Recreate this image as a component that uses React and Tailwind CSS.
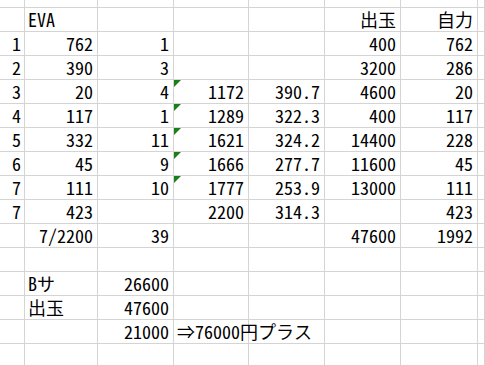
import React from 'react'

const rows = [
  // [rowNo, A, B, C, D, E, F, flagged]
  ['', { t: 'EVA', left: true }, '', '', '', '出玉', '自力', false],
  ['1', '762', '1', '', '', '400', '762', false],
  ['2', '390', '3', '', '', '3200', '286', false],
  ['3', '20', '4', '1172', '390.7', '4600', '20', true],
  ['4', '117', '1', '1289', '322.3', '400', '117', true],
  ['5', '332', '11', '1621', '324.2', '14400', '228', true],
  ['6', '45', '9', '1666', '277.7', '11600', '45', true],
  ['7', '111', '10', '1777', '253.9', '13000', '111', true],
  ['7', '423', '', '2200', '314.3', '', '423', false],
  ['', '7/2200', '39', '', '', '47600', '1992', false],
  ['', '', '', '', '', '', '', false],
  ['', { t: 'Bサ', left: true }, '26600', '', '', '', '', false],
  ['', { t: '出玉', left: true }, '47600', '', '', '', '', false],
  ['', '', '21000', { t: '⇒76000円プラス', left: true }, '', '', '', false],
]

const Cell = ({ value, flagged, first }) => {
  const v = typeof value === 'object' ? value : { t: value, left: false }
  return (
    <div
      className={`relative flex items-end border-r border-b border-[#d4d4d4] whitespace-nowrap leading-[20px] pb-[2px] ${
        v.left ? 'justify-start pl-[3px]' : first ? 'justify-end pr-[3px]' : 'justify-end pr-[4px]'
      }`}
    >
      {flagged && (
        <span className="absolute left-0 top-0 w-0 h-0 border-t-[7px] border-r-[7px] border-t-[#1a7f1a] border-r-transparent" />
      )}
      <span className="relative">{v.t}</span>
    </div>
  )
}

export default function App() {
  return (
    <div
      className="w-[485px] h-[365px] overflow-hidden bg-white text-black text-[18px]"
      style={{ fontFamily: '"Noto Sans Mono CJK JP", "Noto Sans CJK JP", monospace' }}
    >
      <div className="grid grid-cols-[25px_73px_76px_75px_76px_76px_77px_1fr] grid-rows-[8px_repeat(14,24px)_21px]">
        {Array.from({ length: 8 }).map((_, i) => (
          <div key={`top-${i}`} className="border-r border-b border-[#d4d4d4]" />
        ))}
        {rows.map((r, ri) => (
          <React.Fragment key={ri}>
            {r.slice(0, 7).map((c, ci) => (
              <Cell key={ci} value={c} first={ci === 0} flagged={ci === 3 && r[7]} />
            ))}
            <div className="border-r border-b border-[#d4d4d4]" />
          </React.Fragment>
        ))}
        {Array.from({ length: 8 }).map((_, i) => (
          <div key={`bot-${i}`} className="border-r border-[#d4d4d4]" />
        ))}
      </div>
    </div>
  )
}
